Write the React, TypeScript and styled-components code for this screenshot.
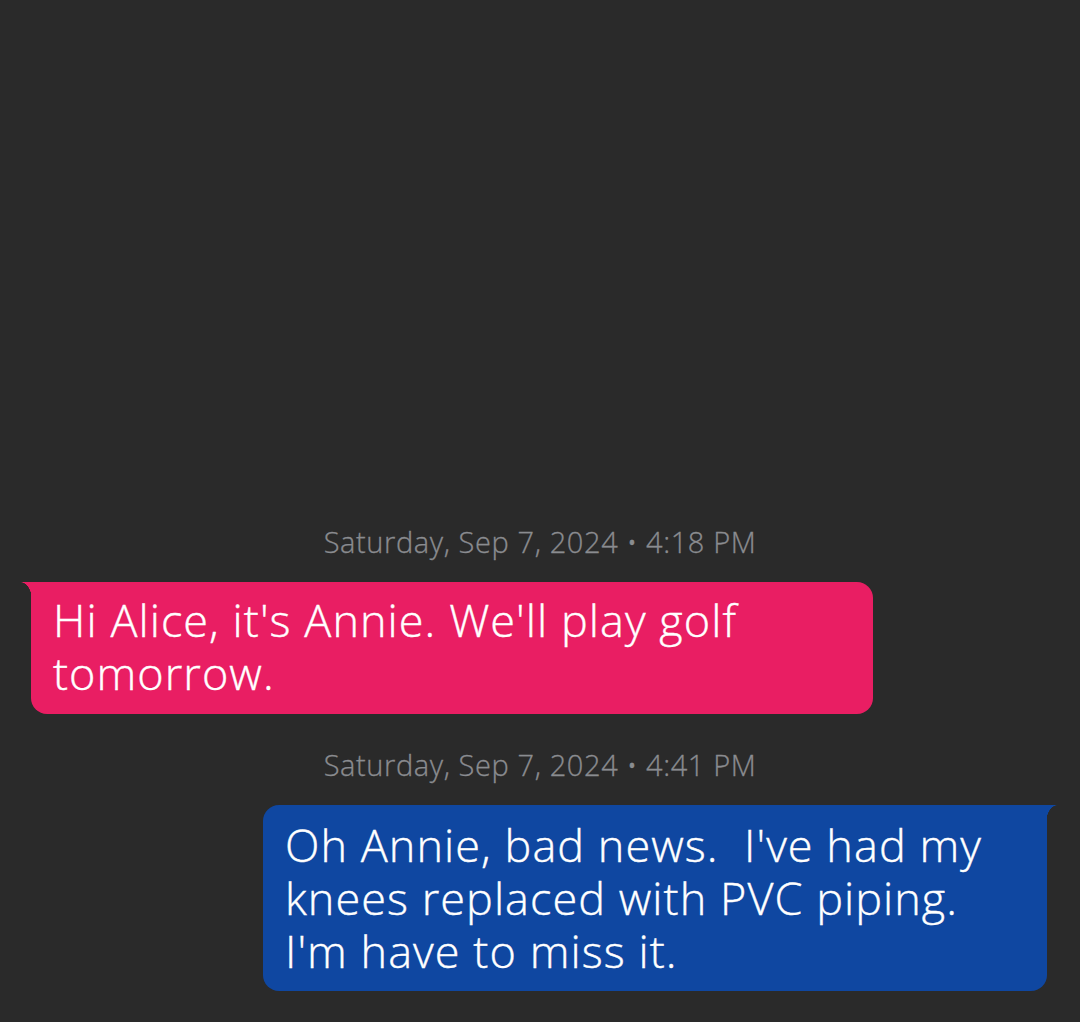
import React from "react";
import styled, { createGlobalStyle } from "styled-components";

const Global = createGlobalStyle`
  html, body { margin: 0; padding: 0; background: #2a2a2a; }
  body { font-family: "Open Sans", "Lato", sans-serif; }
`;

const Screen = styled.div`
  height: 1022px;
  background: #2a2a2a;
  display: flex;
  flex-direction: column;
  justify-content: flex-end;
  padding-bottom: 31px;
  box-sizing: border-box;
`;

const Stamp = styled.div`
  text-align: center;
  color: #8a8c90;
  font-size: 29px;
  font-weight: 300;
  letter-spacing: 0.6px;
  line-height: 36px;
  margin: 0 0 22px;
  -webkit-text-stroke: 0.3px #8a8c90;
`;

const Row = styled.div<{ $out?: boolean }>`
  display: flex;
  justify-content: ${(p) => (p.$out ? "flex-end" : "flex-start")};
  padding: ${(p) => (p.$out ? "0 33px 0 0" : "0 0 0 31px")};
  margin-bottom: ${(p) => (p.$out ? "0" : "33px")};
`;

const Bubble = styled.div<{ $out?: boolean; $w: number }>`
  position: relative;
  width: ${(p) => p.$w}px;
  box-sizing: border-box;
  background: ${(p) => (p.$out ? "#0f47a1" : "#e91e63")};
  color: #fff;
  font-size: 45px;
  font-weight: 300;
  letter-spacing: 1.05px;
  line-height: 53px;
  -webkit-text-stroke: 0.4px #fff;
  padding: ${(p) => (p.$out ? "13px 22px 14px" : "11px 22px 15px")};
  border-radius: ${(p) => (p.$out ? "16px 0 16px 16px" : "0 16px 16px 16px")};
  white-space: pre;

  &::before {
    content: "";
    position: absolute;
    top: 0;
    width: 11px;
    height: 18px;
    ${(p) => (p.$out ? "right: -10px;" : "left: -10px;")}
    background: ${(p) =>
      p.$out
        ? "radial-gradient(ellipse 11px 18px at 100% 100%, transparent 96%, #0f47a1 100%)"
        : "radial-gradient(ellipse 11px 18px at 0 100%, transparent 96%, #e91e63 100%)"};
    border-radius: ${(p) => (p.$out ? "0 2px 0 0" : "2px 0 0 0")};
  }
`;

export default function App() {
  return (
    <>
      <Global />
      <Screen>
        <Stamp>Saturday, Sep 7, 2024 • 4:18 PM</Stamp>
        <Row>
          <Bubble $w={842}>{"Hi Alice, it's Annie. We'll play golf\ntomorrow."}</Bubble>
        </Row>
        <Stamp>Saturday, Sep 7, 2024 • 4:41 PM</Stamp>
        <Row $out>
          <Bubble $out $w={784}>
            {"Oh Annie, bad news.  I've had my\nknees replaced with PVC piping.\nI'm have to miss it."}
          </Bubble>
        </Row>
      </Screen>
    </>
  );
}
